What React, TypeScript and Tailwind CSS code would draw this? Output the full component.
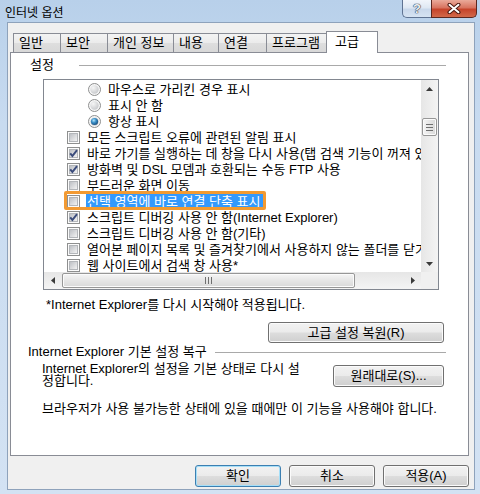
import React from "react";

type Row = { kind: "radio" | "check"; checked: boolean; text: string; selected?: boolean };

const ROWS: Row[] = [
  { kind: "radio", checked: false, text: "마우스로 가리킨 경우 표시" },
  { kind: "radio", checked: false, text: "표시 안 함" },
  { kind: "radio", checked: true, text: "항상 표시" },
  { kind: "check", checked: false, text: "모든 스크립트 오류에 관련된 알림 표시" },
  { kind: "check", checked: true, text: "바로 가기를 실행하는 데 창을 다시 사용(탭 검색 기능이 꺼져 있을 때)" },
  { kind: "check", checked: true, text: "방화벽 및 DSL 모뎀과 호환되는 수동 FTP 사용" },
  { kind: "check", checked: false, text: "부드러운 화면 이동" },
  { kind: "check", checked: false, text: "선택 영역에 바로 연결 단축 표시", selected: true },
  { kind: "check", checked: true, text: "스크립트 디버깅 사용 안 함(Internet Explorer)" },
  { kind: "check", checked: false, text: "스크립트 디버깅 사용 안 함(기타)" },
  { kind: "check", checked: false, text: "열어본 페이지 목록 및 즐겨찾기에서 사용하지 않는 폴더를 닫기" },
  { kind: "check", checked: false, text: "웹 사이트에서 검색 창 사용*" },
];

function Defs() {
  return (
    <svg width="0" height="0" className="shrink-0">
      <defs>
        <linearGradient id="cbInner" x1="0" y1="0" x2="1" y2="1">
          <stop offset="0" stopColor="#babdc2" />
          <stop offset="1" stopColor="#f6f6f6" />
        </linearGradient>
        <radialGradient id="rbInner" cx="0.35" cy="0.3" r="0.8">
          <stop offset="0" stopColor="#f6f6f6" />
          <stop offset="1" stopColor="#c4c6c9" />
        </radialGradient>
        <radialGradient id="rbDot" cx="0.4" cy="0.35" r="0.7">
          <stop offset="0" stopColor="#b4e6fc" />
          <stop offset="0.45" stopColor="#3b90c8" />
          <stop offset="1" stopColor="#164877" />
        </radialGradient>
      </defs>
    </svg>
  );
}

function CheckBox({ checked }: { checked: boolean }) {
  return (
    <svg width="13" height="13" viewBox="0 0 13 13" className="shrink-0">
      <rect x="0.5" y="0.5" width="12" height="12" fill="#fbfbfb" stroke="#8e8f8f" />
      <rect x="2.5" y="2.5" width="8" height="8" fill="url(#cbInner)" stroke="#b3b6ba" />
      {checked && (
        <path d="M3.2 6.4 L5.4 9 L10 3.2" fill="none" stroke="#3b4c7c" strokeWidth="2" />
      )}
    </svg>
  );
}

function Radio({ checked }: { checked: boolean }) {
  return (
    <svg width="13" height="13" viewBox="0 0 13 13" className="shrink-0">
      <circle cx="6.5" cy="6.5" r="6" fill="#f6f6f6" stroke="#8e8f8f" />
      <circle cx="6.5" cy="6.5" r="4.2" fill="url(#rbInner)" />
      {checked && <circle cx="6.5" cy="6.5" r="3.6" fill="url(#rbDot)" />}
    </svg>
  );
}

function Arrow({ dir }: { dir: "up" | "down" | "left" | "right" }) {
  const d =
    dir === "up"
      ? "M3.5 0 L7 4 L0 4 Z"
      : dir === "down"
      ? "M0 0 L7 0 L3.5 4 Z"
      : dir === "left"
      ? "M0 3.5 L4 0 L4 7 Z"
      : "M0 0 L4 3.5 L0 7 Z";
  const w = dir === "up" || dir === "down" ? 7 : 4;
  const h = dir === "up" || dir === "down" ? 4 : 7;
  return (
    <svg width={w} height={h} viewBox={`0 0 ${w} ${h}`}>
      <path d={d} fill="#3a3a3a" />
    </svg>
  );
}

function Button({
  children,
  className,
  isDefault = false,
}: {
  children: React.ReactNode;
  className: string;
  isDefault?: boolean;
}) {
  return (
    <div
      className={
        "flex items-center justify-center rounded-[3px] border bg-[linear-gradient(to_bottom,#f2f2f2_0%,#ebebeb_48%,#dddddd_52%,#cfcfcf_100%)] leading-[14px] " +
        (isDefault
          ? "border-[#3c7fb1] shadow-[inset_0_0_0_1px_#a6dff8] "
          : "border-[#707070] shadow-[inset_0_0_0_1px_#fbfbfb] ") +
        className
      }
    >
      {children}
    </div>
  );
}

const TABS: { label: string; w: string; selected?: boolean }[] = [
  { label: "일반", w: "w-[48px]" },
  { label: "보안", w: "w-[48px]" },
  { label: "개인 정보", w: "w-[67px]" },
  { label: "내용", w: "w-[46px]" },
  { label: "연결", w: "w-[49px]" },
  { label: "프로그램", w: "w-[61px]" },
  { label: "고급", w: "w-[52px]", selected: true },
];

export default function App() {
  return (
    <div className="w-[480px] h-[494px] overflow-hidden flex flex-col bg-[linear-gradient(to_bottom,#b8d0ea,#c8dbf0_25%,#d3e2f3)] text-[13px] text-black [font-family:'Liberation_Sans','Noto_Sans_CJK_KR',sans-serif]">
      {/* Title bar */}
      <div className="h-[22px] shrink-0 flex items-start">
        <Defs />
        <div className="pl-[5px] pt-[5px] leading-[16px] text-[12px] text-black">인터넷 옵션</div>
        <div className="ml-auto mr-[3px] flex">
          <div className="w-[29px] h-[18px] border-l border-b border-[#5f7392] rounded-bl-[5px] bg-[linear-gradient(to_bottom,#f1f5fb,#dfe8f3_45%,#c9d8eb_55%,#d6e3f2)] flex items-center justify-center">
            <span className="text-[13px] font-bold leading-none text-[#eef1f5] [text-shadow:0_0_1px_#2a3850,0_0_1px_#2a3850,0_0_1px_#2a3850]">?</span>
          </div>
          <div className="w-[46px] h-[18px] border-l border-b border-r border-[#5b2820] rounded-br-[5px] bg-[linear-gradient(to_bottom,#eaaa9a,#d87460_45%,#c6442b_55%,#d2694a)] flex items-center justify-center">
            <svg width="14" height="11" viewBox="0 0 14 11">
              <path d="M2.5 1.8 L11.5 9.2 M11.5 1.8 L2.5 9.2" stroke="#4a1810" strokeWidth="4" strokeLinecap="round" />
              <path d="M2.5 1.8 L11.5 9.2 M11.5 1.8 L2.5 9.2" stroke="#ffffff" strokeWidth="2" strokeLinecap="round" />
            </svg>
          </div>
        </div>
      </div>

      {/* Client area */}
      <div className="ml-[7px] w-[468px] h-[468px] shrink-0 border border-[#8ea2bb] bg-[#f0f0f0] flex flex-col">
        <div className="ml-[2px] mt-[8px] w-[459px] flex flex-col">
          {/* Tabs */}
          <div className="flex items-end h-[21px] pl-[3px]">
            {TABS.map((t, i) =>
              t.selected ? (
                <div
                  key={t.label}
                  className={
                    "relative z-10 -ml-px -mb-px h-[22px] border border-b-0 border-[#898c95] bg-white flex items-center pl-[8px] pb-[1px] leading-[14px] " +
                    t.w
                  }
                >
                  {t.label}
                </div>
              ) : (
                <div
                  key={t.label}
                  className={
                    "h-[19px] border border-b-0 border-[#898c95] bg-[linear-gradient(to_bottom,#f3f3f3,#ebebeb_50%,#dedede_52%,#d8d8d8)] flex items-center pl-[5px] leading-[14px] " +
                    (i > 0 ? "-ml-px " : "") +
                    t.w
                  }
                >
                  {t.label}
                </div>
              )
            )}
          </div>

          {/* Tab page */}
          <div className="h-[404px] border border-[#898c95] bg-white flex flex-col">
            {/* 설정 header */}
            <div className="flex items-center h-[24px] pl-[19px] pr-[22px]">
              <span className="leading-[14px]">설정</span>
              <div className="flex-1 ml-[25px] h-px bg-[#a9a9a9]" />
            </div>

            {/* List box */}
            <div className="ml-[32px] mt-[2px] w-[396px] h-[211px] border border-[#828790] bg-white flex flex-col">
              <div className="flex h-[192px]">
                <div className="flex-1 overflow-hidden pt-[1px]">
                  {ROWS.map((r, i) => (
                    <div
                      key={i}
                      className={
                        "relative h-[16px] flex items-center whitespace-nowrap leading-[15px] " +
                        (r.kind === "radio" ? "pl-[44px]" : "pl-[23px]")
                      }
                    >
                      {r.kind === "radio" ? <Radio checked={r.checked} /> : <CheckBox checked={r.checked} />}
                      {r.selected ? (
                        <span className="ml-[6px] bg-[#3399ff] text-white pl-px pr-[2px]">{r.text}</span>
                      ) : (
                        <span className="ml-[7px]">{r.text}</span>
                      )}
                      {r.selected && (
                        <div className="absolute left-[20px] top-[-2px] w-[202px] h-[19px] border-[3px] border-[#f29a33] rounded-[2px]" />
                      )}
                    </div>
                  ))}
                </div>
                {/* Vertical scrollbar */}
                <div className="w-[17px] flex flex-col bg-[linear-gradient(to_right,#e6e6e6,#f4f4f4)]">
                  <div className="h-[17px] flex items-center justify-center">
                    <Arrow dir="up" />
                  </div>
                  <div className="flex-1 flex flex-col">
                    <div className="mt-[21px] mx-px h-[18px] rounded-[2px] border border-[#979797] bg-[linear-gradient(to_right,#f5f5f5,#e6e6e6_50%,#d9d9d9)] shadow-[inset_0_0_0_1px_#fbfbfb] flex flex-col items-center justify-center gap-[2px]">
                      <div className="w-[7px] h-px bg-[#6f6f6f]" />
                      <div className="w-[7px] h-px bg-[#6f6f6f]" />
                      <div className="w-[7px] h-px bg-[#6f6f6f]" />
                    </div>
                  </div>
                  <div className="h-[17px] flex items-center justify-center">
                    <Arrow dir="down" />
                  </div>
                </div>
              </div>
              {/* Horizontal scrollbar */}
              <div className="flex h-[17px]">
                <div className="flex-1 flex bg-[linear-gradient(to_bottom,#e6e6e6,#f4f4f4)]">
                  <div className="w-[17px] flex items-center justify-center">
                    <Arrow dir="left" />
                  </div>
                  <div className="flex-1 flex items-stretch">
                    <div className="ml-px my-px w-[293px] rounded-[2px] border border-[#979797] bg-[linear-gradient(to_bottom,#f5f5f5,#e6e6e6_50%,#d9d9d9)] shadow-[inset_0_0_0_1px_#fbfbfb] flex items-center justify-center gap-[2px]">
                      <div className="w-px h-[7px] bg-[#6f6f6f]" />
                      <div className="w-px h-[7px] bg-[#6f6f6f]" />
                      <div className="w-px h-[7px] bg-[#6f6f6f]" />
                    </div>
                  </div>
                  <div className="w-[17px] flex items-center justify-center">
                    <Arrow dir="right" />
                  </div>
                </div>
                <div className="w-[17px] bg-[#f0f0f0]" />
              </div>
            </div>

            {/* restart note */}
            <div className="ml-[35px] mt-[8px] leading-[14px] whitespace-nowrap">
              *Internet Explorer를 다시 시작해야 적용됩니다.
            </div>

            <div className="mt-[10px] flex justify-end pr-[24px]">
              <Button className="w-[176px] h-[21px]">고급 설정 복원(R)</Button>
            </div>

            {/* group 2 header */}
            <div className="mt-[2px] h-[14px] flex items-center pl-[17px] pr-[22px]">
              <span className="leading-[14px] whitespace-nowrap">Internet Explorer 기본 설정 복구</span>
              <div className="flex-1 ml-[8px] h-px bg-[#a9a9a9]" />
            </div>

            <div className="mt-[4px] h-[24px] flex pl-[31px] pr-[24px]">
              <div className="leading-[12px] whitespace-nowrap">
                Internet Explorer의 설정을 기본 상태로 다시 설
                <br />
                정합니다.
              </div>
              <div className="ml-auto mt-[2px]">
                <Button className="w-[111px] h-[22px]">원래대로(S)...</Button>
              </div>
            </div>

            <div className="ml-[31px] mt-[15px] leading-[14px] whitespace-nowrap">
              브라우저가 사용 불가능한 상태에 있을 때에만 이 기능을 사용해야 합니다.
            </div>
          </div>
        </div>

        {/* Dialog buttons */}
        <div className="mt-[9px] flex justify-end gap-[8px] pr-[5px]">
          <Button className="w-[86px] h-[22px]" isDefault>
            확인
          </Button>
          <Button className="w-[86px] h-[22px]">취소</Button>
          <Button className="w-[86px] h-[22px]">적용(A)</Button>
        </div>
      </div>
    </div>
  );
}
